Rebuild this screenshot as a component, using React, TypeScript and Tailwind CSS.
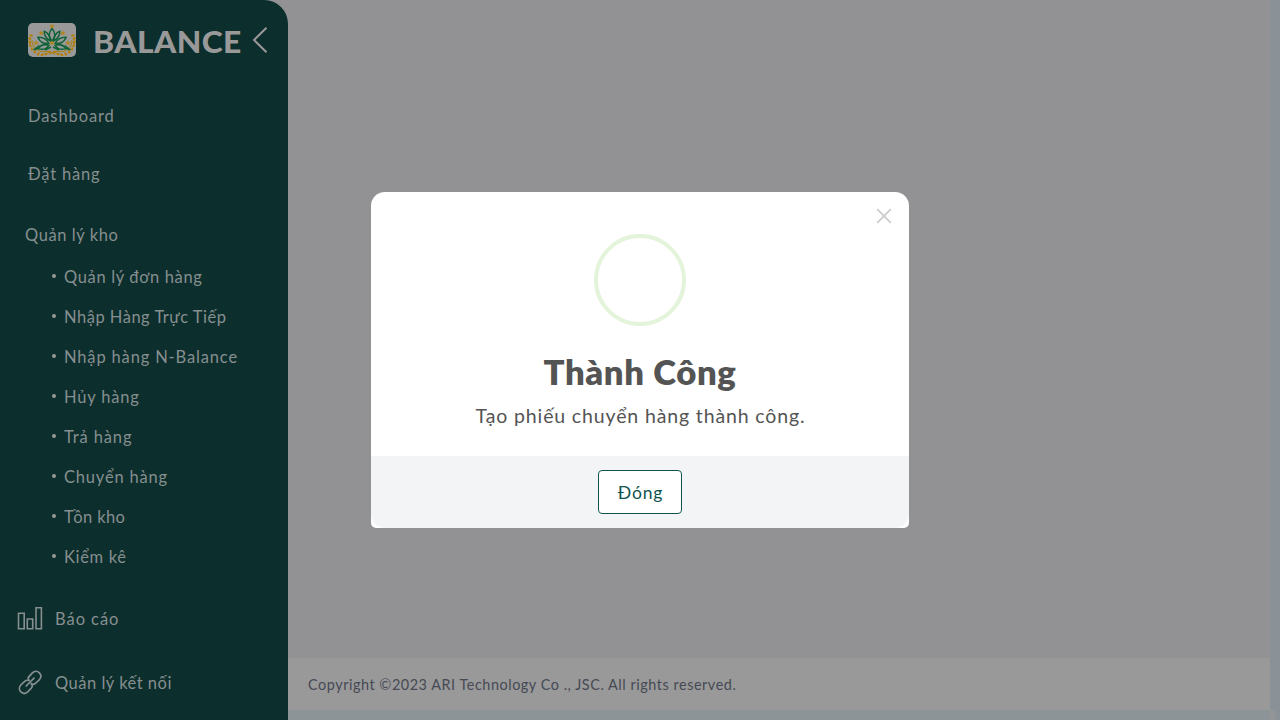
import React from "react";

const stockItems = [
  { label: "Quản lý đơn hàng", spacing: "tracking-[0.65px]" },
  { label: "Nhập Hàng Trực Tiếp", spacing: "tracking-[0.5px]" },
  { label: "Nhập hàng N-Balance", spacing: "tracking-[0.84px]" },
  { label: "Hủy hàng", spacing: "tracking-[0.8px]" },
  { label: "Trả hàng", spacing: "tracking-[0.87px]" },
  { label: "Chuyển hàng", spacing: "tracking-[0.8px]" },
  { label: "Tồn kho", spacing: "tracking-[0.4px]" },
  { label: "Kiểm kê", spacing: "tracking-[0.65px]" },
];

const STAR = "M0-3 .8-1 2.9-1 1.2.3 1.9 2.4 0 1.2-1.9 2.4-1.2.3-2.9-1-.8-1Z";
const STARS = [[24, 3.3], [13.2, 10], [34.8, 10], [8, 20], [40, 20], [24, 20]];
const GRAINS = [[3.2, 12.5], [1.8, 15.5], [1.7, 19], [2.3, 22.5], [4, 26], [6.8, 28.8], [10.3, 30.9], [14.2, 31.7], [18, 31], [21.2, 29]];

function Logo() {
  return (
    <svg className="h-[34px] w-12 shrink-0 rounded-[5px] bg-[#999]" viewBox="0 0 48 34">
      {[false, true].map((flip) => (
        <g key={String(flip)} transform={flip ? "translate(48 0) scale(-1 1)" : undefined}>
          <path d="M4 17C4 24.5 9.5 29.5 17 28.3 21 28 24.5 29.5 27 31.5" fill="none" stroke="#ad7d0c" strokeWidth="1" />
          {GRAINS.map(([x, y], i) => (
            <ellipse key={i} cx={x} cy={y} rx="1.8" ry="1.2" fill="#b27f09" transform={`rotate(${20 + i * 18} ${x} ${y})`} />
          ))}
          <g fill="none" stroke="#0c6337" strokeWidth="1.5" strokeLinejoin="round">
            <path d="M22.6 18C18 15.5 16 12 16.2 8.2 19.8 9.5 22 13 22.6 18Z" />
            <path d="M21 20.5C15.5 20.8 11.5 18.5 9.8 14.2 15 14 19 16.5 21 20.5Z" />
            <path d="M21 22.3C16.5 20.8 13 21.5 10.3 25.6 14.5 27 18.5 26 21 22.3Z" />
            <path d="M10.3 25.6 6 26.6 11.5 22.5M17 27 23 24" />
          </g>
        </g>
      ))}
      <path d="M24 5.5C20 10 20.6 14 24 18 27.4 14 28 10 24 5.5Z" fill="none" stroke="#0c6337" strokeWidth="1.5" />
      <g fill="#b08620">
        {STARS.map(([x, y]) => <path key={`${x}-${y}`} d={STAR} transform={`translate(${x} ${y})`} />)}
      </g>
    </svg>
  );
}

function Sidebar() {
  return (
    <aside className="h-[720px] w-72 shrink-0 overflow-hidden rounded-tr-[24px] bg-[#0c2e2c] text-[16.5px] leading-6 text-[#868f90]">
      <header className="flex h-20 items-center pl-7">
        <Logo />
        <h1 className="ml-[17px] w-[153px] origin-left scale-x-[1.06] pt-px text-[30px] leading-10 font-black tracking-[0.4px] whitespace-nowrap text-[#999]">BALANCE</h1>
        <svg className="ml-1.5 h-7 w-4" viewBox="0 0 16 28" fill="none" stroke="#999" strokeWidth="2">
          <path d="M14.5 1.7 2 14 14.5 26.3" />
        </svg>
      </header>
      <nav className="pt-6">
        <div className="pl-7 tracking-[0.9px]">Dashboard</div>
        <div className="mt-[34px] pl-7 tracking-[0.82px]">Đặt hàng</div>
        <div className="mt-[37px] pl-[25px] tracking-[0.58px]">Quản lý kho</div>
        <ul className="mt-[11px]">
          {stockItems.map((item) => (
            <li key={item.label} className="flex h-10 items-center pb-1 pl-[52px]">
              <span className="mr-2 h-1 w-1 rounded-full bg-[#999]" />
              <span className={`pt-0.5 ${item.spacing}`}>{item.label}</span>
            </li>
          ))}
        </ul>
        <div className="mt-5 flex h-10 items-center pl-[17px]">
          <svg className="mr-3 h-[26px] w-[26px]" viewBox="0 0 26 26" fill="none" stroke="#868f90" strokeWidth="1.6">
            <path d="M1.5 8.3H7.2V23.7H1.5ZM10.3 14H15.7V23.7H10.3ZM19 2.8H24.4V23.7H19Z" />
          </svg>
          <span className="pt-0.5 tracking-[0.95px]">Báo cáo</span>
        </div>
        <div className="mt-6 flex h-10 items-center pl-[17px]">
          <svg className="mr-3 h-[26px] w-[26px]" viewBox="0 0 26 26" fill="none" stroke="#868f90" strokeWidth="1.7" strokeLinecap="round">
            <path d="M9.2 17 17 9.2M11.6 11.2 11.2 8.6 15.1 4.1C20-.8 27.2 6 22.2 11L18.7 14.2C17 15.6 15 15.6 14.1 14.6M12.1 11.4C10.5 10.8 9 11.1 7.4 12.6L3.8 16C-.5 21 6 27.4 11 22.6L14.6 18.8C15.4 17.6 15.4 16.2 14.7 14.7" />
          </svg>
          <span className="pt-0.5 tracking-[0.5px]">Quản lý kết nối</span>
        </div>
      </nav>
    </aside>
  );
}

function SuccessModal() {
  return (
    <div className="absolute inset-0 flex items-center justify-center">
      <section className="relative h-[336px] w-[538px] overflow-hidden rounded-t-[14px] rounded-b-[5px] bg-white text-center text-[#545454]">
        <button aria-label="Close" className="absolute top-4 right-[17.5px] h-4 w-4">
          <svg viewBox="0 0 16 16" className="h-4 w-4" fill="none" stroke="#ccc" strokeWidth="1.8">
            <path d="M1.2 1.2 14.8 14.8M14.8 1.2 1.2 14.8" />
          </svg>
        </button>
        <div className="mx-auto mt-[42px] h-[92px] w-[92px] rounded-full border-4 border-[#e4f4db]" />
        <h2 className="mt-[26px] scale-x-[1.05] text-[33px] leading-10 font-extrabold tracking-[0.6px]">Thành Công</h2>
        <p className="mt-[10px] pl-px text-[19.5px] leading-7 tracking-[0.86px]">Tạo phiếu chuyển hàng thành công.</p>
        <footer className="mt-[26px] flex h-[72px] items-center justify-center rounded-b-[14px] bg-[#f2f4f6]">
          <button className="h-11 w-[84px] rounded-[4px] border border-[#105450] bg-white pt-0.5 pl-px text-[17.5px] tracking-[0.85px] text-[#105450]">Đóng</button>
        </footer>
      </section>
    </div>
  );
}

export default function App() {
  return (
    <div className="relative flex h-[720px] w-[1280px] overflow-hidden bg-[#929193] font-['Lato','Noto_Sans',sans-serif]">
      <Sidebar />
      <main className="flex flex-1 flex-col justify-end bg-[#929193]">
        <footer className="flex h-[52px] items-center bg-[#999] pt-0.5 pl-5 text-[14.4px] tracking-[0.55px] text-[#464a55]">
          Copyright ©2023 ARI Technology Co ., JSC. All rights reserved.
        </footer>
        <div className="h-2.5 bg-[#8d9498]" />
      </main>
      <div className="flex w-2.5 flex-col justify-end bg-[#8b9297]">
        <div className="h-2.5 w-[5px] bg-[#939496]" />
      </div>
      <SuccessModal />
    </div>
  );
}
